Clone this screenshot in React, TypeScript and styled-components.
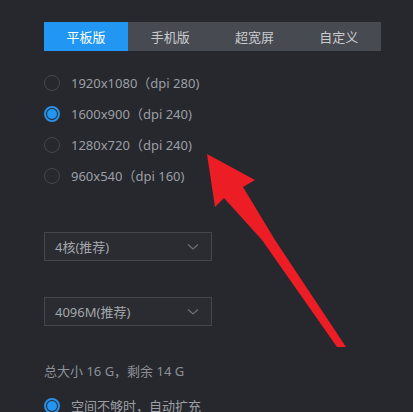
import styled, { createGlobalStyle } from "styled-components";

const GlobalStyle = createGlobalStyle`
    html, body {
        margin: 0;
        padding: 0;
        background: #26282d;
        overflow: hidden;
    }
    body {
        font-family: "Noto Sans", "Noto Sans CJK SC", sans-serif;
    }
`;

const Page = styled.div`
    position: relative;
    width: 413px;
    height: 412px;
    overflow: hidden;
    background: #26282d;
    padding: 22px 0 0 44px;
    box-sizing: border-box;
`;

const Tabs = styled.div`
    display: flex;
    width: 337px;
    height: 29px;
    background: #474a51;
`;

const Tab = styled.div<{ $active?: boolean }>`
    flex: 1;
    display: flex;
    align-items: center;
    justify-content: center;
    font-size: 13px;
    color: ${(p) => (p.$active ? "#ffffff" : "#c9cbcf")};
    background: ${(p) => (p.$active ? "#2196f3" : "transparent")};
`;

const RadioList = styled.div`
    display: flex;
    flex-direction: column;
    margin-top: 16px;
`;

const RadioRow = styled.div`
    display: flex;
    align-items: center;
    height: 31px;
    gap: 11px;
    font-size: 13px;
    color: #9c9fa5;
`;

const Radio = styled.span<{ $checked?: boolean }>`
    width: 16px;
    height: 16px;
    border-radius: 50%;
    box-sizing: border-box;
    border: ${(p) => (p.$checked ? "2px solid #2a8fe6" : "1px solid #44474d")};
    display: flex;
    align-items: center;
    justify-content: center;
    &::after {
        content: "";
        display: ${(p) => (p.$checked ? "block" : "none")};
        width: 10px;
        height: 10px;
        border-radius: 50%;
        background: #2196f3;
    }
`;

const Select = styled.div<{ $top: number }>`
    display: flex;
    align-items: center;
    justify-content: space-between;
    width: 168px;
    height: 29px;
    box-sizing: border-box;
    margin-top: ${(p) => p.$top}px;
    padding: 0 12px 0 10px;
    border: 1px solid #43464c;
    background: #2a2c31;
    font-size: 13px;
    color: #a3a6ab;
`;

const Info = styled.div`
    margin-top: 35px;
    height: 20px;
    line-height: 20px;
    font-size: 13px;
    color: #8e9197;
`;

const Bottom = styled(RadioRow)`
    margin-top: 9px;
`;

const Overlay = styled.svg`
    position: absolute;
    left: 0;
    top: 0;
    pointer-events: none;
`;

const Chevron = () => (
    <svg width="12" height="8" viewBox="0 0 12 8">
        <path d="M1 1.5 L6 6 L11 1.5" fill="none" stroke="#6c6f75" strokeWidth="1.3" />
    </svg>
);

const options = [
    "1920x1080（dpi 280)",
    "1600x900（dpi 240)",
    "1280x720（dpi 240)",
    "960x540（dpi 160)",
];

const App = () => (
    <Page>
        <GlobalStyle />
        <Tabs>
            <Tab $active>平板版</Tab>
            <Tab>手机版</Tab>
            <Tab>超宽屏</Tab>
            <Tab>自定义</Tab>
        </Tabs>
        <RadioList>
            {options.map((o, i) => (
                <RadioRow key={o}>
                    <Radio $checked={i === 1} />
                    {o}
                </RadioRow>
            ))}
        </RadioList>
        <Select $top={41}>
            4核(推荐)
            <Chevron />
        </Select>
        <Select $top={36}>
            4096M(推荐)
            <Chevron />
        </Select>
        <Info>总大小 16 G，剩余 14 G</Info>
        <Bottom>
            <Radio $checked />
            空间不够时，自动扩充
        </Bottom>
        <Overlay width="413" height="412" viewBox="0 0 413 412">
            <polygon
                points="207,154 255,180 243,187 275,240 346,347 337,347 262,240 224,198 215,207"
                fill="#ec1d25"
            />
        </Overlay>
    </Page>
);

export default App;
